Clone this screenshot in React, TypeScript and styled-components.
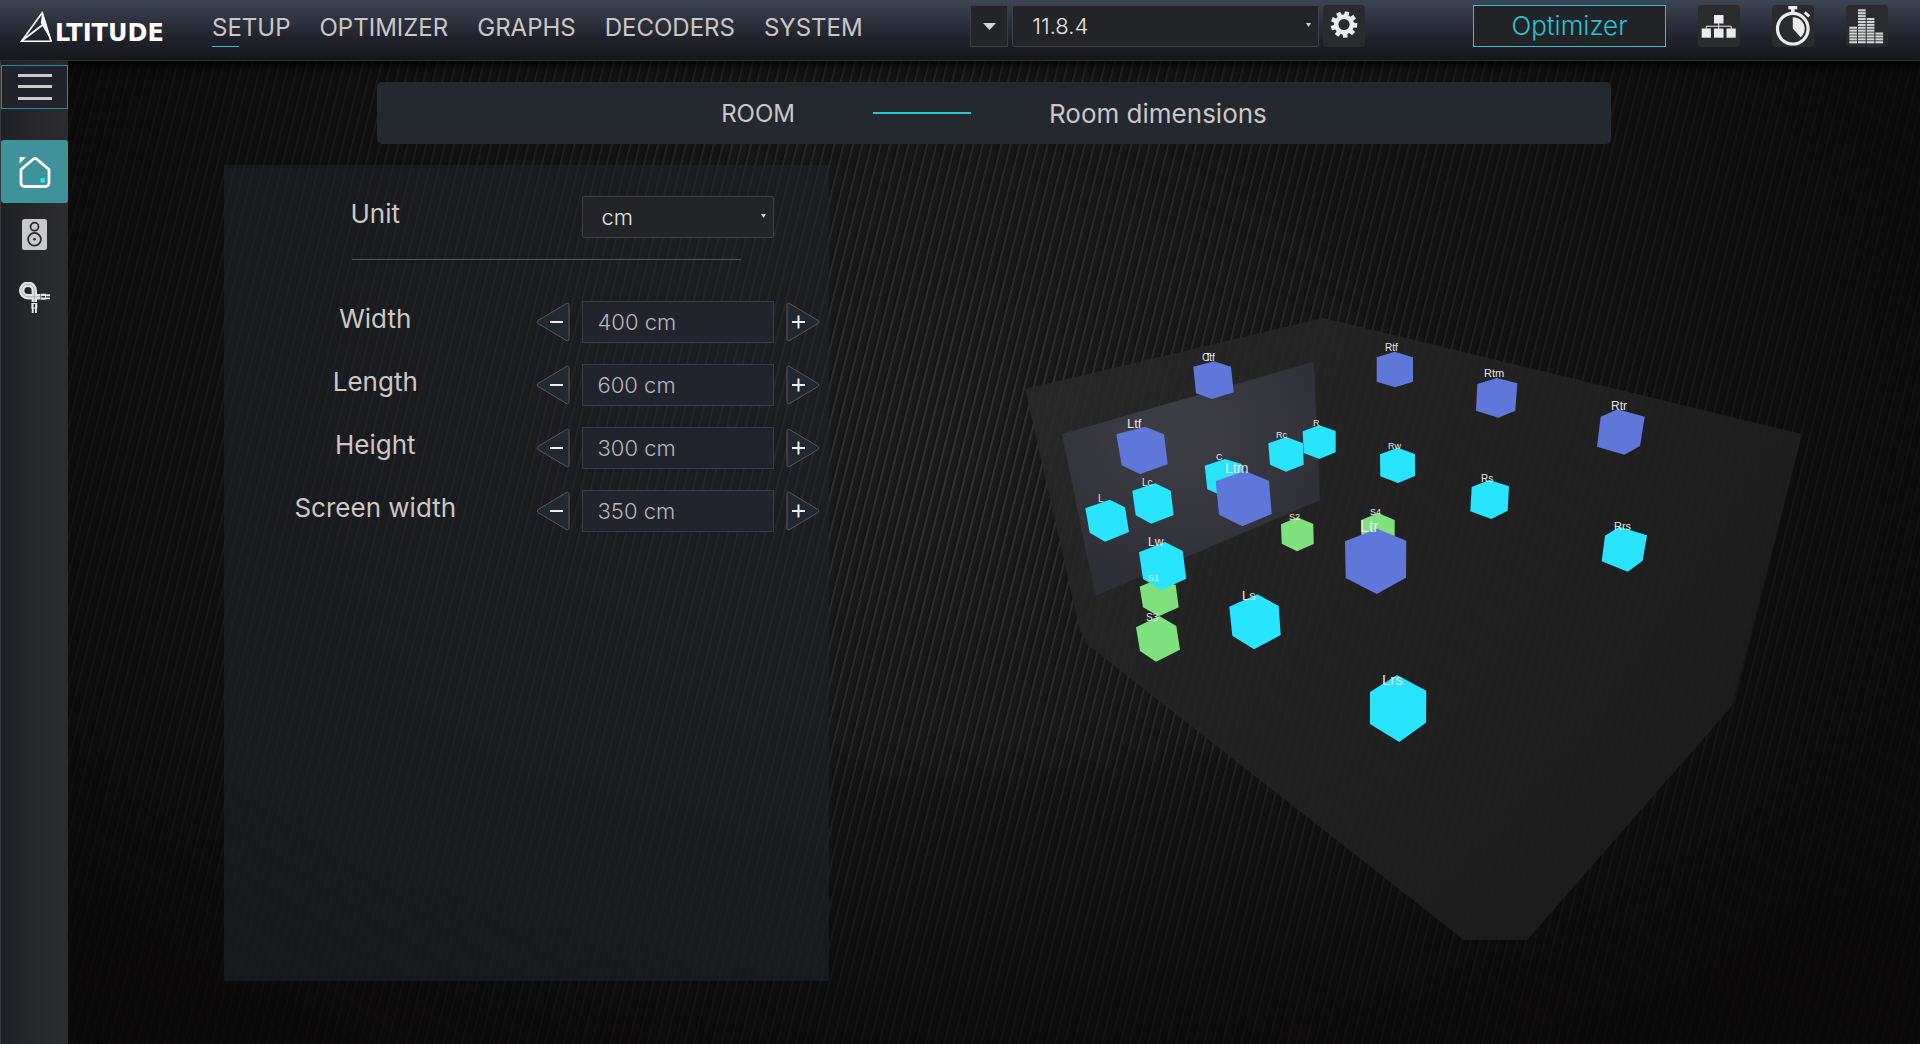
import React, { useState } from "react";
import styled, { createGlobalStyle } from "styled-components";

const CYAN = "#25c4d6";
const TEXT = "#cbc7c7";

const GlobalStyle = createGlobalStyle`
  *, *::before, *::after { box-sizing: border-box; }
  body {
    margin: 0;
    background: #0c0b0b;
    color: ${TEXT};
    font-family: Inter, "Liberation Sans", sans-serif;
  }
  button, input, select { font: inherit; color: inherit; }
`;

const Page = styled.div`
  display: flex;
  flex-direction: column;
  min-height: 100vh;
  background:
    linear-gradient(rgba(0, 0, 0, 0) 70%, rgba(8, 6, 6, 0.45)),
    radial-gradient(ellipse 52% 80% at 50% 44%, rgba(8, 7, 7, 0) 0%, rgba(8, 7, 7, 0.25) 35%, rgba(8, 7, 7, 0.82) 100%),
    repeating-linear-gradient(104deg, #1c1c1c 0, #1a1a1a 4px, #131313 6px, #323232 7px, #323232 8px, #1c1c1c 9px);
`;

const Header = styled.header`
  display: flex;
  align-items: flex-start;
  padding: 5px 32px 11px 20px;
  border-bottom: 1px solid #303032;
  background: linear-gradient(#3c4553 0%, #2f3440 30%, #1f222a 65%, #17181b 100%);
  box-shadow: 0 3px 10px #000;
`;

const Logo = styled.a`
  display: flex;
  align-items: flex-end;
  width: 192px;
  gap: 2px;
  padding-top: 6px;
  color: #fff;
  text-decoration: none;
  svg { flex: none; }
`;

const LogoText = styled.span`
  font-family: "DejaVu Sans", sans-serif;
  font-size: 24px;
  font-weight: 700;
  line-height: 20px;
`;

const Nav = styled.nav`
  display: flex;
  gap: 29px;
  padding-top: 2px;
`;

const NavLink = styled.a<{ $active?: boolean }>`
  position: relative;
  color: ${TEXT};
  font-size: 24px;
  line-height: 42px;
  text-decoration: none;
  &::after {
    content: "";
    position: absolute;
    left: 0;
    bottom: 2px;
    width: 27px;
    height: 1px;
    background: ${(p) => (p.$active ? CYAN : "transparent")};
  }
`;

const PresetGroup = styled.div`
  display: flex;
  gap: 4px;
  margin: 0 auto;
`;

const SquareButton = styled.button`
  display: grid;
  place-items: center;
  width: 38px;
  height: 42px;
  padding: 0;
  border: 1px solid #3b3d41;
  background: #232427;
`;

const IconButton = styled.button`
  width: 42px;
  height: 42px;
  padding: 0;
  border: 0;
  border-radius: 4px;
  background: #2a2b2d;
  svg { display: block; }
`;

const SelectBox = styled.div<{ $width: number }>`
  position: relative;
  flex: none;
  width: ${(p) => p.$width}px;
  svg {
    position: absolute;
    right: 8px;
    top: 18px;
    pointer-events: none;
  }
`;

const Select = styled.select`
  appearance: none;
  width: 100%;
  height: 42px;
  padding: 0 19px;
  border: 1px solid #3e4044;
  border-radius: 2px;
  background: #232427;
  color: #e4e4e4;
  font-size: 22px;
  font-weight: 300;
`;

const Tools = styled.div`
  display: flex;
  gap: 32px;
`;

const OptimizerButton = styled.button`
  width: 193px;
  height: 42px;
  padding: 0;
  border: 1px solid ${CYAN};
  background: #212327;
  color: ${CYAN};
  font-size: 26px;
  font-weight: 300;
  line-height: 36px;
`;

const Body = styled.div`
  display: flex;
  flex: 1;
`;

const Sidebar = styled.aside`
  display: flex;
  flex-direction: column;
  flex: none;
  width: 68px;
  padding-top: 4px;
  border-left: 1px solid #3a3a3c;
  background: linear-gradient(90deg, #1f2226, #2c2c2d);
`;

const MenuButton = styled.button`
  display: grid;
  place-items: center;
  height: 44px;
  margin-bottom: 31px;
  padding: 0;
  border: 1px solid #1f8f9c;
  background: #20232b;
`;

const SideButton = styled.button<{ $active?: boolean }>`
  display: grid;
  place-items: center;
  height: 63px;
  padding: 0;
  border: 0;
  border-radius: 3px;
  background: ${(p) => (p.$active ? "#3f9299" : "transparent")};
`;

const Main = styled.main`
  display: flex;
  flex: 1;
  flex-direction: column;
  min-width: 0;
  padding: 21px 0 63px;
`;

const Banner = styled.div`
  display: flex;
  align-items: center;
  justify-content: center;
  gap: 78px;
  width: 66.66%;
  height: 62px;
  margin: 0 auto 21px;
  border-radius: 5px;
  background: #24282f;
  font-size: 26px;
`;

const BannerTitle = styled.h1`
  margin: 0;
  font-size: 24px;
  font-weight: 400;
`;

const BannerRule = styled.span`
  width: 98px;
  height: 2px;
  background: ${CYAN};
`;

const Content = styled.div`
  display: flex;
  flex: 1;
  padding-left: 156px;
`;

const Panel = styled.section`
  flex: none;
  width: 605px;
  padding-top: 31px;
  background: linear-gradient(rgba(32, 35, 40, 0.55), rgba(29, 31, 36, 0.7));
`;

const Row = styled.div`
  display: flex;
  align-items: center;
  margin-bottom: 21px;
`;

const RowLabel = styled.label`
  width: 50%;
  padding-bottom: 6px;
  font-size: 26px;
  line-height: 36px;
  text-align: center;
`;

const UnitControl = styled.div`
  padding-left: 55px;
`;

const Divider = styled.hr`
  height: 1px;
  margin: 0 88px 41px 128px;
  border: 0;
  background: #56575a;
`;

const Stepper = styled.div`
  display: flex;
  align-items: center;
  gap: 12px;
  padding-left: 9px;
`;

const StepButton = styled.button`
  padding: 0;
  border: 0;
  background: none;
  svg { display: block; }
`;

const ValueInput = styled.input`
  width: 192px;
  height: 42px;
  padding: 0 15px;
  border: 1px solid #3a3c46;
  border-radius: 0;
  background: #21232d;
  color: #b9b7b9;
  font-size: 22px;
  font-weight: 300;
`;

const RoomView = styled.figure`
  flex: 1;
  min-width: 0;
  margin: 0;
  svg { display: block; width: 100%; height: 100%; }
`;

const SpeakerName = styled.text`
  fill: #e6e6e6;
  font-family: "Liberation Sans", Arial, sans-serif;
`;

const Arrow = ({ w, h }: { w: number; h: number }) => (
  <svg width={w} height={h} viewBox="0 0 10 6" preserveAspectRatio="none" aria-hidden="true">
    <path d="M0 0H10L5 6Z" fill="#d8d4d4" />
  </svg>
);

const LogoMark = () => (
  <svg width="33" height="32" viewBox="0 0 33 32" aria-hidden="true">
    <path d="M22 2L1.500 30.300H31Z" fill="none" stroke="#fff" strokeWidth="1.600" />
    <path d="M1.500 30L22.500 14" fill="none" stroke="#fff" strokeWidth="1.600" />
    <path d="M22.500 0L32 31L22.800 15.500L20.800 12Z" fill="#fff" />
  </svg>
);

const gearPath = () => {
  const teeth = 9;
  const step = (Math.PI * 2) / teeth;
  const points: string[] = [];
  for (let i = 0; i < teeth; i++) {
    const a = i * step - 1.33;
    [[-0.24, 10], [-0.17, 13.4], [0.17, 13.4], [0.24, 10]].forEach(([off, r]) => {
      points.push(`${(21 + r * Math.cos(a + off)).toFixed(2)} ${(19.5 + r * Math.sin(a + off)).toFixed(2)}`);
    });
  }
  return `M${points.join("L")}Z M26.600 19.500A5.600 5.600 0 1 0 15.400 19.500A5.600 5.600 0 1 0 26.600 19.500Z`;
};

const GearIcon = () => (
  <svg width="42" height="42" viewBox="0 0 42 42" aria-hidden="true">
    <path d={gearPath()} fill="#ececec" fillRule="evenodd" />
  </svg>
);

const NetworkIcon = () => (
  <svg width="42" height="42" viewBox="0 0 42 42" fill="#ececec" aria-hidden="true">
    <rect x="16" y="10" width="9.500" height="8.500" />
    <rect x="3.700" y="23.500" width="9.200" height="9.200" />
    <rect x="16" y="23.500" width="9.500" height="9.200" />
    <rect x="28.500" y="23.500" width="9.200" height="9.200" />
    <path d="M8.300 24V21.200H33.200V24M20.700 18V24" fill="none" stroke="#ececec" strokeWidth="1" />
  </svg>
);

const StopwatchIcon = () => (
  <svg width="42" height="42" viewBox="0 0 42 42" fill="#ececec" aria-hidden="true">
    <circle cx="20.800" cy="23.700" r="15.300" fill="none" stroke="#ececec" strokeWidth="3.200" />
    <rect x="16.300" y="1" width="9" height="3.300" />
    <rect x="19" y="3" width="3.600" height="5" />
    <rect x="32" y="8" width="6" height="2.800" transform="rotate(42 35 9.400)" />
    <path d="M20.800 23.500V12.300A11.300 11.300 0 0 1 28.600 32.300Z" />
  </svg>
);

const EqualizerIcon = () => {
  const bars = [6, 12, 9, 4];
  return (
    <svg width="42" height="42" viewBox="0 0 42 42" fill="#d4d4d4" aria-hidden="true">
      {bars.map((count, b) =>
        Array.from({ length: count }, (_, i) => (
          <rect key={`${b}-${i}`} x={3.3 + b * 8.7} y={36.2 - i * 2.9} width="7.700" height="2.100" />
        ))
      )}
    </svg>
  );
};

const MenuIcon = () => (
  <svg width="36" height="28" viewBox="0 0 36 28" fill="#cbcbcb" aria-hidden="true">
    <rect x="1" y="1" width="34" height="3" />
    <rect x="1" y="12" width="34" height="3" />
    <rect x="1" y="24" width="34" height="3" />
  </svg>
);

const HomeIcon = () => (
  <svg width="32" height="32" viewBox="0 0 32 32" aria-hidden="true">
    <path
      d="M2 13.500L14.200 3.200Q16 1.600 17.800 3.200L30 13.500V26.500Q30 30.500 26 30.500H6Q2 30.500 2 26.500Z"
      fill="none" stroke="#fff" strokeWidth="2.800" strokeLinejoin="round"
    />
    <path d="M0.600 1H7L0.600 7.800Z" fill="#fff" />
    <rect x="21.500" y="22" width="4.400" height="4.400" rx="1" fill="#28e4ff" />
  </svg>
);

const SpeakerIcon = () => (
  <svg width="25" height="31" viewBox="0 0 25 31" aria-hidden="true">
    <rect width="25" height="31" rx="2.500" fill="#c9c9c9" />
    <g fill="none" stroke="#26282b" strokeWidth="1.700">
      <circle cx="12.500" cy="7.700" r="4" />
      <circle cx="12.500" cy="20.300" r="6.400" />
    </g>
    <circle cx="12.500" cy="20.300" r="1.300" fill="#26282b" />
  </svg>
);

const CableIcon = () => (
  <svg width="31" height="31" viewBox="0 0 31 31" aria-hidden="true">
    <path d="M21 14.800H9A6.300 6.300 0 1 1 15.300 8.500V20" fill="none" stroke="#e4e4e4" strokeWidth="5.400" />
    <path d="M21 14.800H9A6.300 6.300 0 1 1 15.300 8.500V20" fill="none" stroke="#9c9ea1" strokeWidth="0.800" />
    <path d="M21.500 11.800H27V17.800H21.500ZM12.300 21H18.300V26.500H12.300Z" fill="#e4e4e4" />
    <path d="M27 13.200H31M27 16.400H31M13.700 26V31M16.900 26V31" stroke="#e4e4e4" strokeWidth="1.900" />
    <path d="M22.500 14.800H26M15.300 22V25.500" stroke="#26282b" strokeWidth="1.500" />
  </svg>
);

const StepIcon = ({ plus }: { plus?: boolean }) => (
  <svg width="34" height="40" viewBox="0 0 34 40" aria-hidden="true">
    <path
      d={
        plus
          ? "M1 3.500Q1 0 4 1.800L32 18.500Q34 20 32 21.500L4 38.200Q1 40 1 36.500Z"
          : "M33 3.500Q33 0 30 1.800L2 18.500Q0 20 2 21.500L30 38.200Q33 40 33 36.500Z"
      }
      fill="#212830" stroke="#555a61" strokeWidth="1"
    />
    <path d={plus ? "M6 20H19M12.500 13.500V26.500" : "M14 20H27"} stroke="#efefef" strokeWidth="2" />
  </svg>
);

const BLUE = "#6077da";
const AQUA = "#28e4ff";
const GREEN = "#7fe27f";

type Speaker = { name: string; color: string; x: number; y: number; size: number; shape: string };

// Listed from the farthest cube to the nearest, so that near ones cover far ones.
const speakers: Speaker[] = [
  { name: "Ctf", color: BLUE, x: 1202, y: 361, size: 10, shape: "1193.3,366.7 1214,361.3 1231,366.7 1233.7,392.3 1212,399 1196,393.3" },
  { name: "Rtf", color: BLUE, x: 1385, y: 351, size: 10, shape: "1376.7,357.3 1394.7,351.7 1413,357.3 1413,381.7 1395,387.3 1376.7,381.7" },
  { name: "Rtm", color: BLUE, x: 1484, y: 377, size: 11, shape: "1477.3,384 1496.7,378 1517.3,383.3 1515.3,410.7 1498.3,417.7 1476,410.7" },
  { name: "Rtr", color: BLUE, x: 1611, y: 410, size: 12, shape: "1600.7,416.7 1617.7,409.3 1644.7,416.7 1640,446 1624.3,454.7 1597,446.7" },
  { name: "R", color: AQUA, x: 1313, y: 426, size: 9, shape: "1302.7,431.3 1319.3,425.3 1335.7,431 1335.7,452.3 1319.3,459 1303.7,453" },
  { name: "Rc", color: AQUA, x: 1276, y: 438, size: 9, shape: "1268.3,443.3 1286.3,437 1303,443.3 1303.7,464.7 1286,471.7 1270,464.7" },
  { name: "C", color: AQUA, x: 1216, y: 460, size: 9, shape: "1204.7,465.7 1225,459 1241.7,464 1243.3,486.7 1225,497 1207.3,489.3" },
  { name: "Rw", color: AQUA, x: 1388, y: 449, size: 9, shape: "1380,454.3 1397.7,447.7 1415,454 1415,476 1398,483 1380.3,476.3" },
  { name: "Rs", color: AQUA, x: 1481, y: 482, size: 10, shape: "1471.7,487 1489.3,480 1509,486.3 1507.7,510.7 1491.3,519 1470.3,511.3" },
  { name: "Rrs", color: AQUA, x: 1614, y: 530, size: 11, shape: "1605,535.7 1619.3,526.7 1647,535.3 1642.7,560.7 1627.7,571.7 1601.7,561.3" },
  { name: "S2", color: GREEN, x: 1289, y: 520, size: 9, shape: "1281,524.3 1297.3,517.3 1313.3,524 1313.7,544 1297,551.3 1281.7,543.7" },
  { name: "S4", color: GREEN, x: 1370, y: 515, size: 9, shape: "1361.3,520 1378,513 1394.7,520 1394.7,540 1378,546.7 1361.3,540" },
  { name: "Lc", color: AQUA, x: 1142, y: 486, size: 10, shape: "1132.3,490.7 1155.3,483.3 1170.7,490.7 1173.7,515 1151.3,523.7 1135.7,515.3" },
  { name: "L", color: AQUA, x: 1098, y: 502, size: 10, shape: "1085.3,508.3 1109.7,499.7 1125,507.3 1129,532 1105,541.7 1089.7,532.7" },
  { name: "Ltf", color: BLUE, x: 1127, y: 428, size: 13, shape: "1116.3,434.3 1145,426.7 1164,434.3 1167.7,464.3 1140,474 1121.7,465.3" },
  { name: "S1", color: GREEN, x: 1148, y: 581, size: 9, shape: "1139.7,586.7 1156.7,579.3 1175.7,585 1178.7,607.3 1158.7,616.3 1143,607.3" },
  { name: "S3", color: GREEN, x: 1146, y: 621, size: 10, shape: "1136,627.3 1159.3,616 1176.3,626 1180,649.7 1156,661.7 1140,651" },
  { name: "Lw", color: AQUA, x: 1148, y: 546, size: 12, shape: "1139,552.3 1165,542 1182.7,551 1186.3,578.7 1161.7,590 1143,579" },
  { name: "Ltm", color: BLUE, x: 1225, y: 473, size: 14, shape: "1215.7,481 1245,471 1269,480.7 1271.7,514 1242.3,526.3 1219,514.7" },
  { name: "Ls", color: AQUA, x: 1242, y: 600, size: 13, shape: "1229.3,606.7 1257.3,594.3 1278.7,606 1280.7,635 1254,649.3 1232.3,635.7" },
  { name: "Ltr", color: BLUE, x: 1360, y: 532, size: 16, shape: "1345,541.3 1377.3,528.7 1406.3,540.7 1406,577.7 1376.7,594 1345.7,578" },
  { name: "Lrs", color: AQUA, x: 1382, y: 685, size: 15, shape: "1370,692 1397,675 1426.3,690.7 1426,722.7 1399.3,742 1370,724" },
];

const RoomDrawing = () => (
  <svg viewBox="829 165 1091 816" role="img" aria-label="Room with speaker positions">
    <defs>
      <linearGradient id="walls" x1="0" y1="0" x2="1" y2="0.600">
        <stop offset="0" stopColor="#292929" />
        <stop offset="0.600" stopColor="#222222" />
        <stop offset="1" stopColor="#1d1d1d" />
      </linearGradient>
      <radialGradient id="screen" cx="0.450" cy="0.300" r="0.700">
        <stop offset="0" stopColor="#404048" />
        <stop offset="1" stopColor="#2e2e36" />
      </radialGradient>
    </defs>
    <polygon
      points="1025,389 1323,318 1802,434 1732,706 1527,940 1464,940 1088,645 1080,631"
      fill="url(#walls)" fillOpacity="0.880"
    />
    <polygon points="1062,434 1313.700,361.700 1320,500 1095.300,595.700" fill="url(#screen)" fillOpacity="0.950" />
    {speakers.map((s) => (
      <polygon key={s.name} points={s.shape} fill={s.color} />
    ))}
    {speakers.map((s) => (
      <SpeakerName key={s.name} x={s.x} y={s.y} fontSize={s.size}>
        {s.name}
      </SpeakerName>
    ))}
    <SpeakerName x={1205} y={361} fontSize={10}>T</SpeakerName>
  </svg>
);

const sections = ["SETUP", "OPTIMIZER", "GRAPHS", "DECODERS", "SYSTEM"];

const dimensions = [
  { id: "width", label: "Width", start: 400 },
  { id: "length", label: "Length", start: 600 },
  { id: "height", label: "Height", start: 300 },
  { id: "screen-width", label: "Screen width", start: 350 },
];

const DimensionRow = ({ id, label, start }: { id: string; label: string; start: number }) => {
  const [value, setValue] = useState(start);
  return (
    <Row>
      <RowLabel htmlFor={id}>{label}</RowLabel>
      <Stepper>
        <StepButton type="button" aria-label={`Decrease ${label}`} onClick={() => setValue(value - 1)}>
          <StepIcon />
        </StepButton>
        <ValueInput
          id={id}
          value={`${value} cm`}
          onChange={(e) => setValue(parseInt(e.target.value, 10) || 0)}
        />
        <StepButton type="button" aria-label={`Increase ${label}`} onClick={() => setValue(value + 1)}>
          <StepIcon plus />
        </StepButton>
      </Stepper>
    </Row>
  );
};

export default function App() {
  return (
    <>
      <GlobalStyle />
      <Page>
        <Header>
          <Logo href="#" aria-label="Altitude">
            <LogoMark />
            <LogoText>LTITUDE</LogoText>
          </Logo>
          <Nav>
            {sections.map((name, i) => (
              <NavLink key={name} href="#" $active={i === 0}>{name}</NavLink>
            ))}
          </Nav>
          <PresetGroup>
            <SquareButton type="button" aria-label="Presets"><Arrow w={13} h={7} /></SquareButton>
            <SelectBox $width={307}>
              <Select aria-label="Speaker layout" defaultValue="11.8.4">
                <option>11.8.4</option>
              </Select>
              <Arrow w={5} h={4} />
            </SelectBox>
            <IconButton type="button" aria-label="Settings"><GearIcon /></IconButton>
          </PresetGroup>
          <Tools>
            <OptimizerButton type="button">Optimizer</OptimizerButton>
            <IconButton type="button" aria-label="Network"><NetworkIcon /></IconButton>
            <IconButton type="button" aria-label="Timer"><StopwatchIcon /></IconButton>
            <IconButton type="button" aria-label="Levels"><EqualizerIcon /></IconButton>
          </Tools>
        </Header>
        <Body>
          <Sidebar>
            <MenuButton type="button" aria-label="Menu"><MenuIcon /></MenuButton>
            <SideButton type="button" aria-label="Room" $active><HomeIcon /></SideButton>
            <SideButton type="button" aria-label="Speakers"><SpeakerIcon /></SideButton>
            <SideButton type="button" aria-label="Connections"><CableIcon /></SideButton>
          </Sidebar>
          <Main>
            <Banner>
              <BannerTitle>ROOM</BannerTitle>
              <BannerRule />
              <span>Room dimensions</span>
            </Banner>
            <Content>
              <Panel>
                <Row>
                  <RowLabel htmlFor="unit">Unit</RowLabel>
                  <UnitControl>
                    <SelectBox $width={192}>
                      <Select id="unit" defaultValue="cm">
                        <option>cm</option>
                      </Select>
                      <Arrow w={5} h={4} />
                    </SelectBox>
                  </UnitControl>
                </Row>
                <Divider />
                {dimensions.map((d) => (
                  <DimensionRow key={d.id} {...d} />
                ))}
              </Panel>
              <RoomView><RoomDrawing /></RoomView>
            </Content>
          </Main>
        </Body>
      </Page>
    </>
  );
}
